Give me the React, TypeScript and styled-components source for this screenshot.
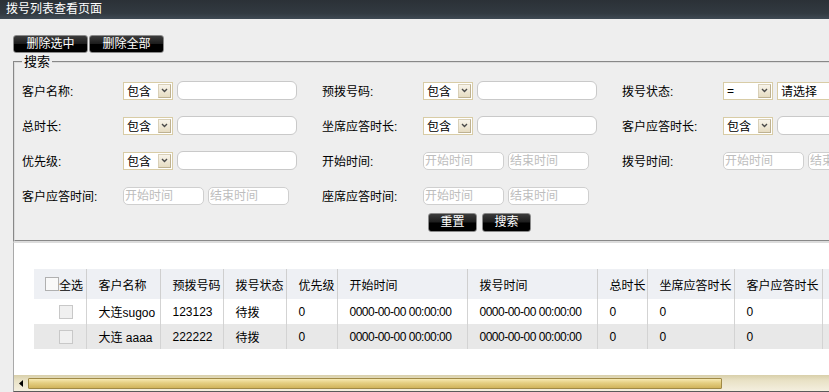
import React from "react";
import styled, { createGlobalStyle } from "styled-components";

const GlobalStyle = createGlobalStyle`
  html, body {
    margin: 0;
    padding: 0;
  }
  body {
    background: #eeeeee;
    font-family: "Liberation Sans", "Noto Sans CJK SC", sans-serif;
    font-size: 12px;
    color: #000;
    overflow: hidden;
  }
`;

const Page = styled.div`
  width: 829px;
  height: 392px;
  overflow: hidden;
  display: flex;
  flex-direction: column;
`;

const TitleBar = styled.div`
  flex: none;
  height: 19px;
  padding-left: 6px;
  line-height: 18px;
  color: #fff;
  background: linear-gradient(#2b3137, #323a41 70%, #3f4a54);
`;

const Toolbar = styled.div`
  display: flex;
  gap: 1px;
  padding: 16px 0 0 13px;
`;

const BlackButton = styled.button<{ $w: number; $h: number }>`
  width: ${({ $w }) => $w}px;
  height: ${({ $h }) => $h}px;
  padding: 0;
  box-sizing: border-box;
  border: 1px solid #8a8a8a;
  border-radius: 3px;
  background: linear-gradient(#3c3c3c, #1c1c1c 48%, #000 52%, #000);
  color: #fff;
  font: inherit;
  line-height: ${({ $h }) => $h - 2}px;
  cursor: pointer;
`;

const Main = styled.div`
  flex: 1;
  display: flex;
  flex-direction: column;
  width: 940px;
  margin-left: 13px;
`;

const SearchBox = styled.fieldset`
  margin: 2px 0 0;
  padding: 4px 0 8px 7px;
  min-width: 0;
  border: 2px groove #dcdcdc;
  border-right: none;
`;

const Legend = styled.legend`
  padding: 0 2px;
  line-height: 14px;
  font-size: 13px;
`;

const FormGrid = styled.div`
  display: grid;
  grid-template-columns: 101px 199px 101px 199px 101px 199px;
  grid-auto-rows: 35px;
  align-items: center;
`;

const Label = styled.span`
  white-space: nowrap;
`;

const Field = styled.div`
  display: flex;
  align-items: center;
  gap: 4px;
`;

const SelectBox = styled.div<{ $w: number }>`
  width: ${({ $w }) => $w}px;
  height: 18px;
  flex: none;
  box-sizing: border-box;
  display: flex;
  align-items: center;
  justify-content: space-between;
  padding: 0 1px 0 3px;
  border: 1px solid #d8cca6;
  background: #fff;
  white-space: nowrap;
`;

const SelectArrow = styled.span`
  width: 13px;
  height: 14px;
  box-sizing: border-box;
  display: flex;
  align-items: center;
  justify-content: center;
  border: 1px solid #d9d0b8;
  border-bottom-color: #bdb192;
  border-right-color: #bdb192;
  background: linear-gradient(#f8f4ea, #e6dcc2);
`;

const TextBox = styled.input`
  width: 120px;
  height: 19px;
  box-sizing: border-box;
  border: 1px solid #c9c9c9;
  border-radius: 6px;
  background: #fff;
  padding: 0 3px;
  font: inherit;
  outline: none;
`;

const DateBox = styled.input`
  width: 81px;
  height: 18px;
  box-sizing: border-box;
  border: 1px solid #cfcfcf;
  border-radius: 5px;
  background: #fff;
  padding: 0 1px;
  font: inherit;
  outline: none;

  &::placeholder {
    color: #bdbdbd;
  }
`;

const ButtonRow = styled.div`
  display: flex;
  gap: 5px;
  padding-left: 406px;
`;

const ListArea = styled.div`
  flex: 1;
  display: flex;
  flex-direction: column;
  padding-top: 26px;
  background: #fff;
  border-top: 1px solid #dcdcdc;
  border-left: 1px solid #a9a9a9;
  border-bottom: 1px solid #5a5a5a;
`;

const Grid = styled.table`
  margin-left: 20px;
  border-collapse: collapse;
  table-layout: fixed;
  width: 868px;
  white-space: nowrap;
`;

const Col = styled.col<{ $w: number }>`
  width: ${({ $w }) => $w}px;
`;

const HeadCell = styled.th`
  height: 30px;
  padding: 0 0 0 12px;
  background: #eef0f4;
  border-right: 1px solid #cfcfcf;
  font-weight: normal;
  text-align: left;
  overflow: hidden;
`;

const Row = styled.tr<{ $alt?: boolean }>`
  background: ${({ $alt }) => ($alt ? "#e8e8e8" : "#fff")};
`;

const Cell = styled.td<{ $pad?: number; $tight?: boolean }>`
  height: 25px;
  padding: 0 0 0 ${({ $pad }) => $pad ?? 12}px;
  border-right: 1px solid #d3d3d3;
  letter-spacing: ${({ $tight }) => ($tight ? "-0.5px" : "normal")};
  overflow: hidden;
`;

const CheckAll = styled.span`
  display: flex;
  align-items: center;
  margin-left: -1px;
`;

const Check = styled.span<{ $head?: boolean }>`
  display: inline-block;
  width: 12px;
  height: 12px;
  border: 1px solid ${({ $head }) => ($head ? "#b0b0b0" : "#c8c8c8")};
  background: ${({ $head }) => ($head ? "#f9f9f9" : "#f0f0f0")};
  vertical-align: middle;
`;

const HScroll = styled.div`
  margin-top: auto;
  height: 16px;
  display: flex;
  align-items: center;
  background: linear-gradient(#d8cfaa, #e9e2c6 35%, #f4efdf);
`;

const ScrollArrow = styled.span`
  width: 14px;
  height: 16px;
  flex: none;
  display: flex;
  align-items: center;
  justify-content: center;
`;

const Thumb = styled.div<{ $w: number }>`
  width: ${({ $w }) => $w}px;
  height: 11px;
  box-sizing: border-box;
  border: 1px solid #a08a46;
  border-radius: 1px;
  background: linear-gradient(#f6e9b2, #e4ce80 45%, #d1b45c);
`;

const ArrowDown = () => (
  <svg width="7" height="5" viewBox="0 0 7 5">
    <path d="M1 1l2.5 2.5L6 1" fill="none" stroke="#4a4a4a" strokeWidth="1.4" />
  </svg>
);

const Select = ({ text, w = 50 }: { text: string; w?: number }) => (
  <SelectBox $w={w}>
    <span>{text}</span>
    <SelectArrow>
      <ArrowDown />
    </SelectArrow>
  </SelectBox>
);

const DateRange = () => (
  <Field>
    <DateBox placeholder="开始时间" />
    <DateBox placeholder="结束时间" />
  </Field>
);

const columns = [
  { title: "客户名称", w: 74 },
  { title: "预拨号码", w: 63 },
  { title: "拨号状态", w: 63 },
  { title: "优先级", w: 51 },
  { title: "开始时间", w: 130 },
  { title: "拨号时间", w: 130 },
  { title: "总时长", w: 50 },
  { title: "坐席应答时长", w: 87 },
  { title: "客户应答时长", w: 88 },
  { title: "", w: 80 },
];

const rows = [
  { name: "大连sugoo", phone: "123123" },
  { name: "大连 aaaa", phone: "222222" },
];

export default function App() {
  return (
    <Page>
      <GlobalStyle />
      <TitleBar>拨号列表查看页面</TitleBar>
      <Toolbar>
        <BlackButton $w={75} $h={18}>删除选中</BlackButton>
        <BlackButton $w={75} $h={18}>删除全部</BlackButton>
      </Toolbar>
      <Main>
        <SearchBox>
          <Legend>搜索</Legend>
          <FormGrid>
            <Label>客户名称:</Label>
            <Field>
              <Select text="包含" />
              <TextBox />
            </Field>
            <Label>预拨号码:</Label>
            <Field>
              <Select text="包含" />
              <TextBox />
            </Field>
            <Label>拨号状态:</Label>
            <Field>
              <Select text="=" />
              <Select text="请选择" w={130} />
            </Field>

            <Label>总时长:</Label>
            <Field>
              <Select text="包含" />
              <TextBox />
            </Field>
            <Label>坐席应答时长:</Label>
            <Field>
              <Select text="包含" />
              <TextBox />
            </Field>
            <Label>客户应答时长:</Label>
            <Field>
              <Select text="包含" />
              <TextBox />
            </Field>

            <Label>优先级:</Label>
            <Field>
              <Select text="包含" />
              <TextBox />
            </Field>
            <Label>开始时间:</Label>
            <DateRange />
            <Label>拨号时间:</Label>
            <DateRange />

            <Label>客户应答时间:</Label>
            <DateRange />
            <Label>座席应答时间:</Label>
            <DateRange />
          </FormGrid>
          <ButtonRow>
            <BlackButton $w={49} $h={19}>重置</BlackButton>
            <BlackButton $w={49} $h={19}>搜索</BlackButton>
          </ButtonRow>
        </SearchBox>

        <ListArea>
          <Grid>
            <colgroup>
              <Col $w={52} />
              {columns.map((c, i) => (
                <Col key={i} $w={c.w} />
              ))}
            </colgroup>
            <thead>
              <tr>
                <HeadCell>
                  <CheckAll>
                    <Check $head />
                    全选
                  </CheckAll>
                </HeadCell>
                {columns.map((c, i) => (
                  <HeadCell key={i}>{c.title}</HeadCell>
                ))}
              </tr>
            </thead>
            <tbody>
              {rows.map((r, i) => (
                <Row key={r.phone} $alt={i % 2 === 1}>
                  <Cell $pad={25}>
                    <Check />
                  </Cell>
                  <Cell>{r.name}</Cell>
                  <Cell>{r.phone}</Cell>
                  <Cell>待拨</Cell>
                  <Cell>0</Cell>
                  <Cell $tight>0000-00-00 00:00:00</Cell>
                  <Cell $tight>0000-00-00 00:00:00</Cell>
                  <Cell>0</Cell>
                  <Cell>0</Cell>
                  <Cell>0</Cell>
                  <Cell />
                </Row>
              ))}
            </tbody>
          </Grid>
          <HScroll>
            <ScrollArrow>
              <svg width="4" height="7" viewBox="0 0 4 7">
                <path d="M4 0L0 3.5L4 7z" fill="#000" />
              </svg>
            </ScrollArrow>
            <Thumb $w={694} />
          </HScroll>
        </ListArea>
      </Main>
    </Page>
  );
}
